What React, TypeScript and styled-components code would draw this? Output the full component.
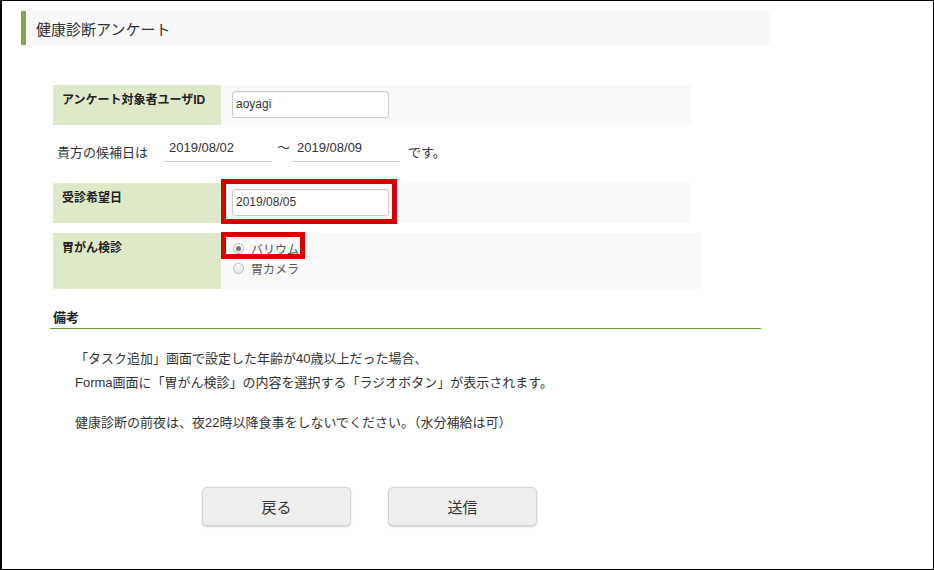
import styled, { createGlobalStyle } from "styled-components";

const GlobalStyle = createGlobalStyle`
  html, body {
    margin: 0;
    padding: 0;
    background: #fff;
  }
  body {
    font-family: "Liberation Sans", "Noto Sans CJK JP", sans-serif;
    color: #333;
  }
  * {
    box-sizing: border-box;
  }
`;

const Frame = styled.div`
  width: 934px;
  height: 570px;
  border: 1px solid #000;
  border-left-width: 2px;
  padding: 10px 0 0 19px;
  overflow: hidden;
`;

const Header = styled.div`
  width: 750px;
  height: 34px;
  background: #f8f8f8;
  border-left: 5px solid #86a84a;
  display: flex;
  align-items: center;
  padding-left: 10px;
`;

const Title = styled.h1`
  margin: 0;
  font-size: 15px;
  font-weight: normal;
  color: #333;
`;

const Form = styled.div`
  margin: 40px 0 0 32px;
  display: flex;
  flex-direction: column;
`;

const Row = styled.div<{ $gap?: number }>`
  display: flex;
  margin-top: ${(p) => p.$gap ?? 0}px;
`;

const Label = styled.div<{ $height: number }>`
  width: 168px;
  height: ${(p) => p.$height}px;
  background: #dde9c8;
  padding: 7px 9px;
  font-size: 12px;
  line-height: 16px;
  font-weight: bold;
  color: #222;
`;

const Value = styled.div<{ $width: number }>`
  position: relative;
  width: ${(p) => p.$width}px;
  background: #f9f9f9;
  padding: 6px 11px;
`;

const TextInput = styled.div`
  width: 157px;
  height: 27px;
  background: #fff;
  border: 1px solid #ccc;
  border-radius: 3px;
  box-shadow: inset 0 1px 1px rgba(0, 0, 0, 0.06);
  padding: 0 3px;
  font-size: 12px;
  line-height: 25px;
  color: #333;
`;

const DateLine = styled.div`
  display: flex;
  align-items: flex-end;
  margin-top: 12px;
  padding-left: 4px;
  font-size: 13px;
  line-height: 16px;
`;

const DateText = styled.span<{ $right?: number; $left?: number; $raise?: number }>`
  margin-right: ${(p) => p.$right ?? 0}px;
  margin-left: ${(p) => p.$left ?? 0}px;
  padding-bottom: ${(p) => p.$raise ?? 1}px;
`;

const LineInput = styled.div`
  width: 107px;
  height: 25px;
  border-bottom: 1px solid #ccc;
  padding: 0 4px;
  font-size: 13px;
  line-height: 22px;
  color: #333;
`;

const Highlight = styled.div<{ $top: number; $w: number; $h: number }>`
  position: absolute;
  left: 0;
  top: ${(p) => p.$top}px;
  width: ${(p) => p.$w}px;
  height: ${(p) => p.$h}px;
  border: 5px solid #d70000;
  pointer-events: none;
`;

const RadioList = styled.div`
  display: flex;
  flex-direction: column;
  padding: 0 0 0 1px;
  margin-top: -1px;
`;

const RadioItem = styled.label`
  display: flex;
  align-items: center;
  gap: 7px;
  height: 20px;
  font-size: 12px;
  color: #555;
`;

const RadioDot = styled.span<{ $checked?: boolean }>`
  position: relative;
  width: 11px;
  height: 11px;
  border-radius: 50%;
  border: 1px solid #b9b9b9;
  background: linear-gradient(#fdfdfd, #e4e4e4);

  &::after {
    content: "";
    display: ${(p) => (p.$checked ? "block" : "none")};
    position: absolute;
    left: 2px;
    top: 2px;
    width: 5px;
    height: 5px;
    border-radius: 50%;
    background: #777;
  }
`;

const Notes = styled.div`
  margin: 20px 0 0 29px;
  width: 711px;
`;

const NotesTitle = styled.div`
  font-size: 13px;
  font-weight: bold;
  line-height: 18px;
  padding: 0 3px 1px;
  border-bottom: 1px solid #6b9a2a;
  color: #222;
`;

const NotesBody = styled.div`
  padding: 18px 0 0 25px;
  font-size: 13px;
  line-height: 24px;
  color: #333;

  p {
    margin: 0 0 16px;
  }
`;

const Buttons = styled.div`
  display: flex;
  gap: 37px;
  margin: 52px 0 0 181px;
`;

const Button = styled.button`
  width: 149px;
  height: 39px;
  background: #eeeeee;
  border: 1px solid #d4d4d4;
  border-radius: 5px;
  box-shadow: 0 1px 2px rgba(0, 0, 0, 0.2);
  font-family: "Liberation Sans", "Noto Sans CJK JP", sans-serif;
  font-size: 15px;
  color: #333;
  cursor: pointer;
`;

export default function App() {
  return (
    <>
      <GlobalStyle />
      <Frame>
        <Header>
          <Title>健康診断アンケート</Title>
        </Header>

        <Form>
          <Row>
            <Label $height={40}>アンケート対象者ユーザID</Label>
            <Value $width={470}>
              <TextInput>aoyagi</TextInput>
            </Value>
          </Row>

          <DateLine>
            <DateText $right={17}>貴方の候補日は</DateText>
            <LineInput>2019/08/02</LineInput>
            <DateText $left={5} $right={3} $raise={6}>
              〜
            </DateText>
            <LineInput>2019/08/09</LineInput>
            <DateText $left={8}>です。</DateText>
          </DateLine>

          <Row $gap={21}>
            <Label $height={40}>受診希望日</Label>
            <Value $width={470}>
              <TextInput>2019/08/05</TextInput>
              <Highlight $top={-4} $w={176} $h={45} />
            </Value>
          </Row>

          <Row $gap={10}>
            <Label $height={56}>胃がん検診</Label>
            <Value $width={480}>
              <RadioList>
                <RadioItem>
                  <RadioDot $checked />
                  バリウム
                </RadioItem>
                <RadioItem>
                  <RadioDot />
                  胃カメラ
                </RadioItem>
              </RadioList>
              <Highlight $top={-1} $w={84} $h={27} />
            </Value>
          </Row>
        </Form>

        <Notes>
          <NotesTitle>備考</NotesTitle>
          <NotesBody>
            <p>
              「タスク追加」画面で設定した年齢が40歳以上だった場合、
              <br />
              Forma画面に「胃がん検診」の内容を選択する「ラジオボタン」が表示されます。
            </p>
            <p>健康診断の前夜は、夜22時以降食事をしないでください。（水分補給は可）</p>
          </NotesBody>
        </Notes>

        <Buttons>
          <Button>戻る</Button>
          <Button>送信</Button>
        </Buttons>
      </Frame>
    </>
  );
}
